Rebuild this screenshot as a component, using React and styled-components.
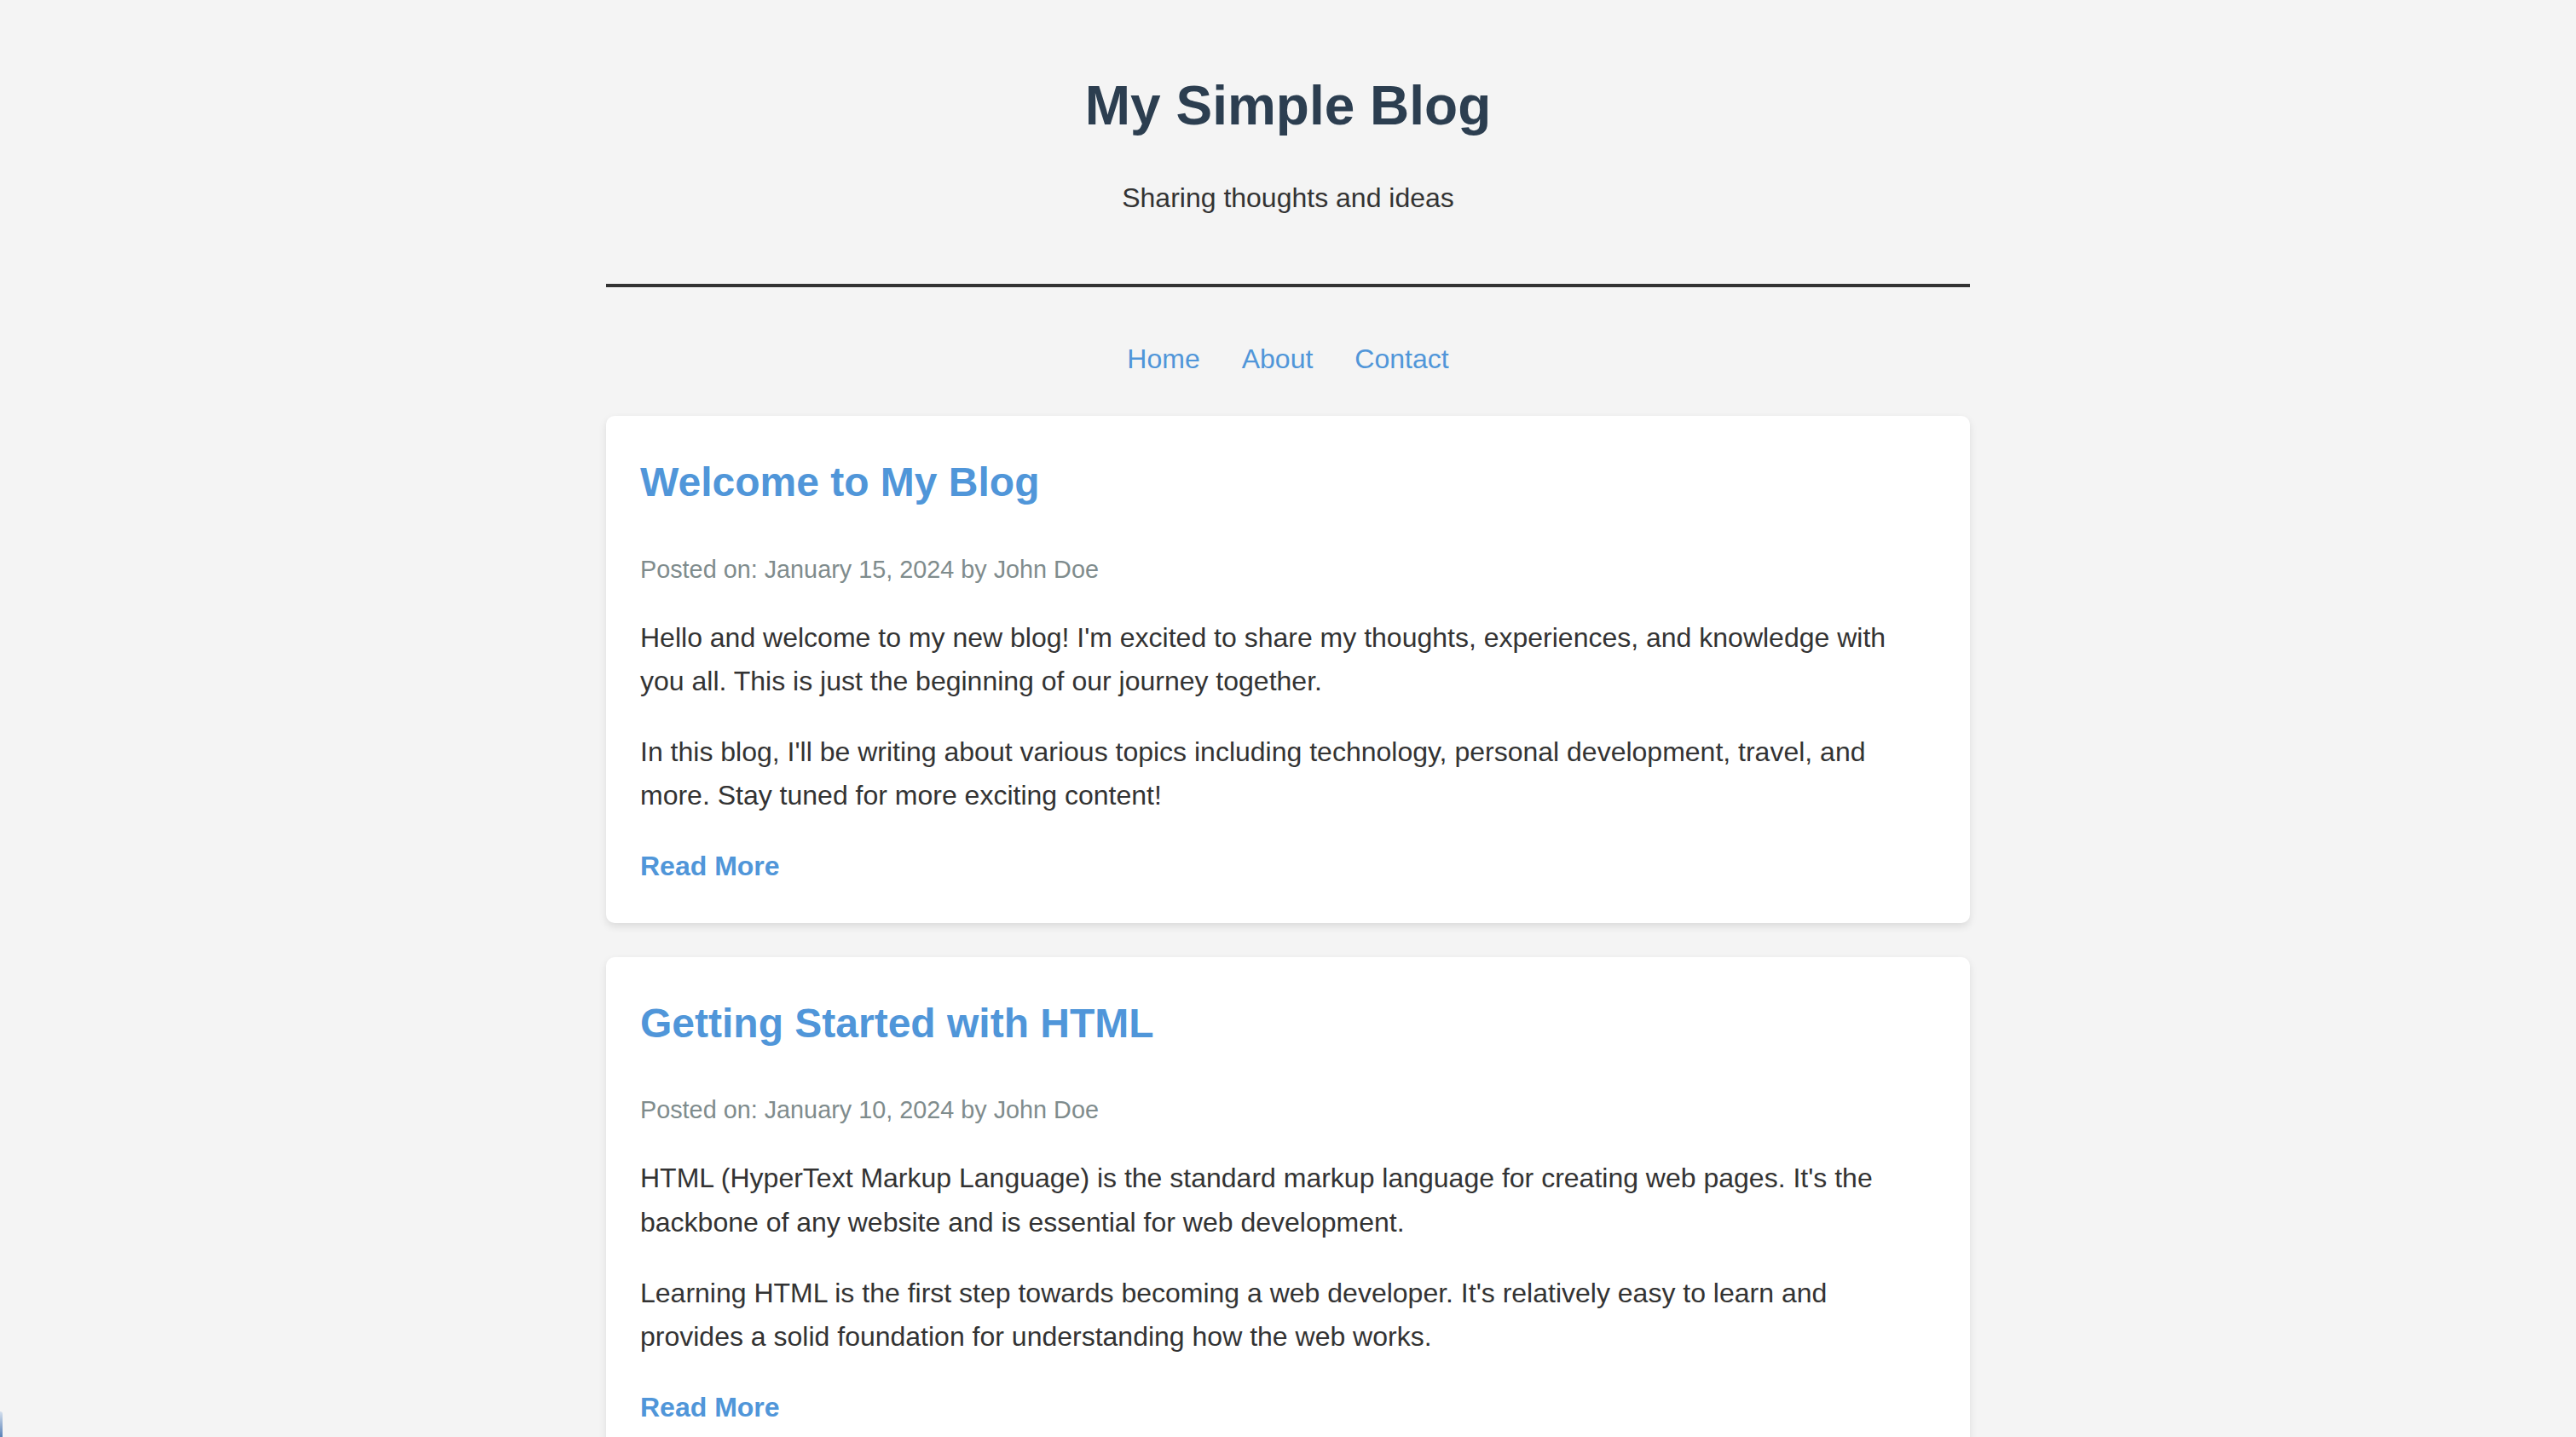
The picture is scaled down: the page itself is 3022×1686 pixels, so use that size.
import React from 'react';
import styled, { createGlobalStyle } from 'styled-components'

const GlobalStyle = createGlobalStyle`
  html, body {
    margin: 0;
    padding: 0;
    background-color: #f4f4f4;
  }
  body {
    font-family: "Liberation Sans", Arial, Helvetica, sans-serif;
    font-size: 32px;
    line-height: 1.6;
    color: #333;
  }
`

const Page = styled.div`
  max-width: 1600px;
  margin: 0 auto;
  padding-bottom: 40px;
`

const Header = styled.header`
  text-align: center;
  padding: 73px 0 74px;
  border-bottom: 4px solid #333;
  h1 {
    margin: 0 0 32px;
    font-size: 64px;
    font-weight: 700;
    color: #2c3e50;
  }
  p {
    margin: 0;
  }
`

const Nav = styled.nav`
  display: flex;
  justify-content: center;
  gap: 49px;
  margin: 39px 0 21px;
  padding: 20px 0;
  a {
    color: #5096d9;
    text-decoration: none;
  }
`

const Post = styled.article`
  background-color: #fff;
  padding: 40px;
  margin-bottom: 40px;
  border-radius: 10px;
  box-shadow: 0 4px 10px rgba(0, 0, 0, 0.1);
  h2 {
    margin: 0 0 40px;
    font-size: 48px;
    font-weight: 700;
    color: #5096d9;
  }
  p {
    margin: 32px 0;
  }
`

const Meta = styled.p`
  && {
    margin: 0 0 32px;
  }
  font-size: 28.8px;
  color: #7f8c8d;
`

const ReadMore = styled.a`
  color: #5096d9;
  font-weight: 700;
  text-decoration: none;
`

// little sliver peeking in at the bottom-left corner
const CornerTab = styled.div`
  position: fixed;
  left: 0;
  bottom: 0;
  width: 3px;
  height: 30px;
  border-top-right-radius: 3px;
  background: linear-gradient(#d5e0ee, #5a82b8);
`

const posts = [
  {
    title: 'Welcome to My Blog',
    date: 'January 15, 2024',
    body: [
      "Hello and welcome to my new blog! I'm excited to share my thoughts, experiences, and knowledge with you all. This is just the beginning of our journey together.",
      "In this blog, I'll be writing about various topics including technology, personal development, travel, and more. Stay tuned for more exciting content!",
    ],
  },
  {
    title: 'Getting Started with HTML',
    date: 'January 10, 2024',
    body: [
      "HTML (HyperText Markup Language) is the standard markup language for creating web pages. It's the backbone of any website and is essential for web development.",
      "Learning HTML is the first step towards becoming a web developer. It's relatively easy to learn and provides a solid foundation for understanding how the web works.",
    ],
  },
]

function App() {
  return (
    <Page>
      <GlobalStyle />
      <Header>
        <h1>My Simple Blog</h1>
        <p>Sharing thoughts and ideas</p>
      </Header>
      <Nav>
        <a href="#">Home</a>
        <a href="#">About</a>
        <a href="#">Contact</a>
      </Nav>
      {
        posts.map((item, index) => {
          return (
            <Post key={index}>
              <h2>{item.title}</h2>
              <Meta>Posted on: {item.date} by John Doe</Meta>
              {item.body.map((text, i) => <p key={i}>{text}</p>)}
              <ReadMore href="#">Read More</ReadMore>
            </Post>
          )
        })
      }
      <CornerTab />
    </Page>
  )
}

export default App;
